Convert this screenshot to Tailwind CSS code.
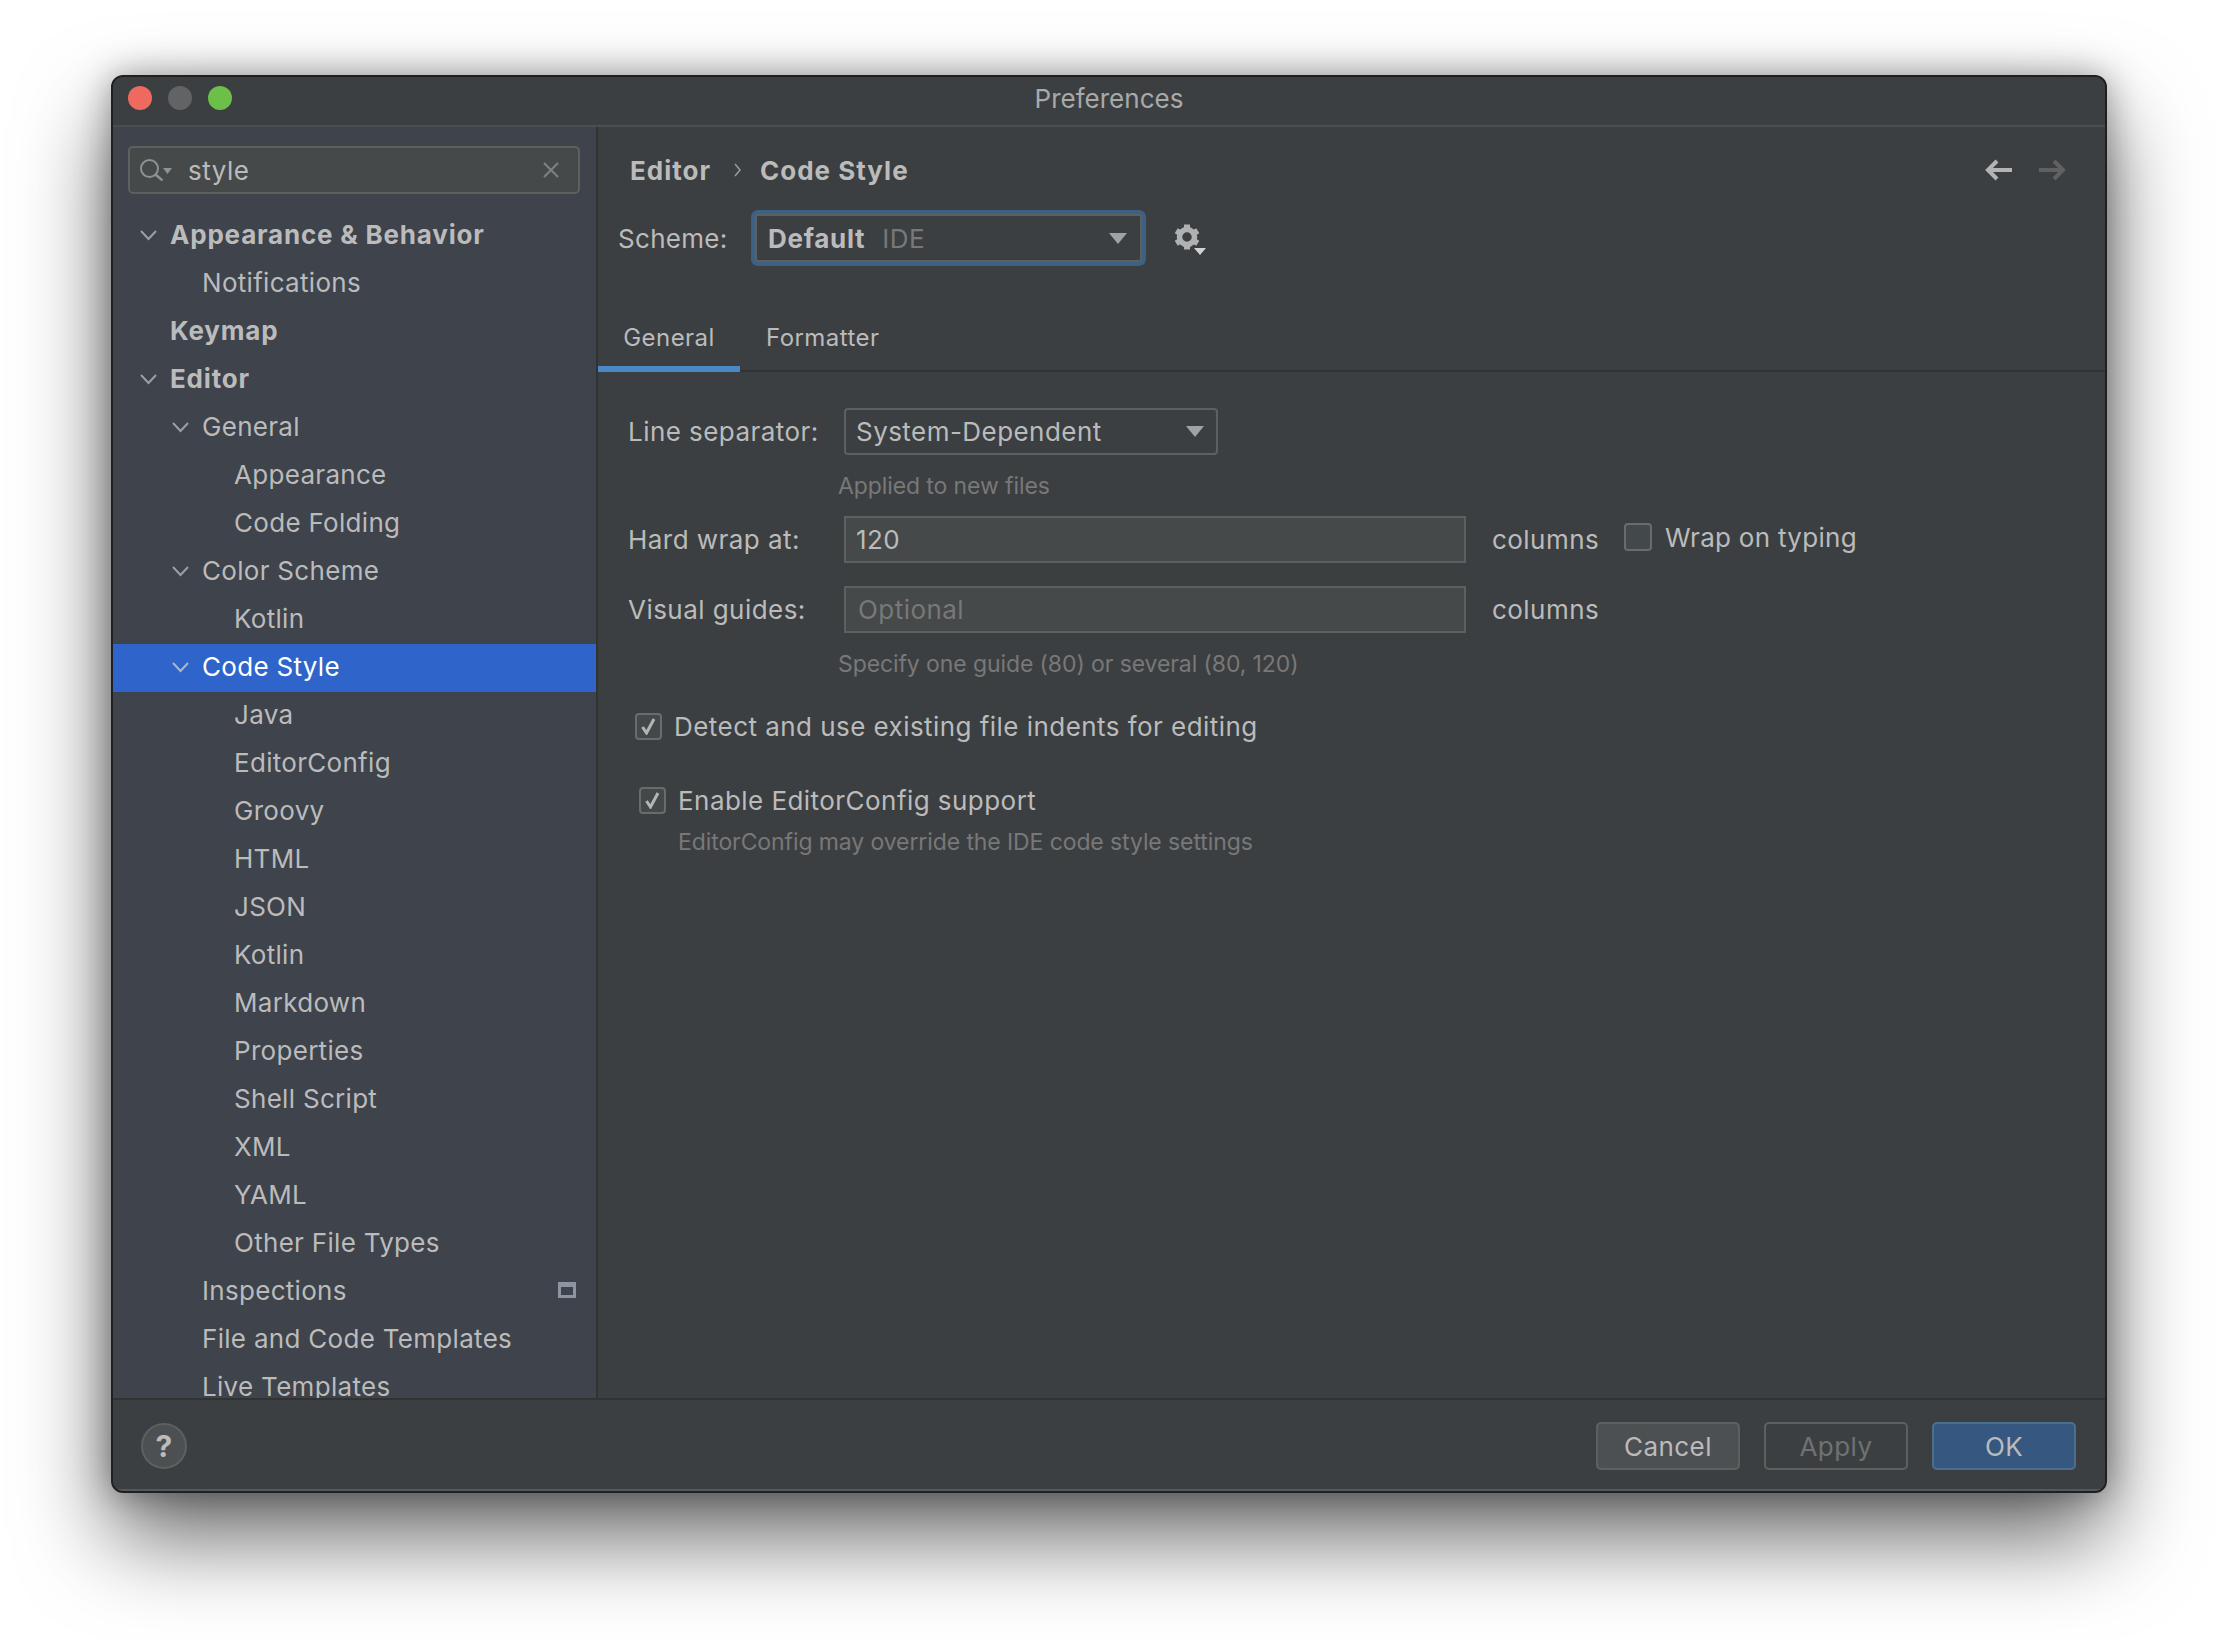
<!DOCTYPE html>
<html lang="en">
<head>
<meta charset="UTF-8">
<title>Preferences</title>
<script src="https://cdn.jsdelivr.net/npm/@tailwindcss/browser@4"></script>
</head>
<body class="h-[1640px] bg-white overflow-hidden font-['Inter',sans-serif] text-[26px] text-[#bbbbbb]">
<div class="absolute left-[111px] top-[75px] w-[1996px] h-[1418px] flex flex-col rounded-[12px] border-2 border-[#1f2021] bg-[#3c3f41] overflow-hidden shadow-[0_44px_90px_rgba(0,0,0,0.6),0_0_34px_rgba(0,0,0,0.35)]">

  <!-- title bar -->
  <div class="relative h-[50px] shrink-0 flex items-center justify-center bg-[#3c3f41] border-b-2 border-[#4b4e50] text-[#a9a9a9] pb-[6px]">
    <div class="absolute left-[15px] top-[9px] flex gap-[16px]">
      <span class="w-[24px] h-[24px] rounded-full bg-[#ee6a5e]"></span>
      <span class="w-[24px] h-[24px] rounded-full bg-[#626365]"></span>
      <span class="w-[24px] h-[24px] rounded-full bg-[#6cc04a]"></span>
    </div>
    <span>Preferences</span>
  </div>

  <div class="flex-1 flex min-h-0">
    <!-- sidebar -->
    <aside class="w-[485px] shrink-0 flex flex-col bg-[#3e434c] border-r-2 border-[#323232] overflow-hidden tracking-[0.3px]">
      <div class="mt-[19px] mx-[15px] h-[48px] shrink-0 w-[452px] flex items-center rounded-[5px] border-2 border-[#5e6060] bg-[#45494a]">
        <svg class="ml-[10px] w-[32px] h-[22px]" viewBox="0 0 32 22" fill="none" stroke="#8f9294" stroke-width="2"><circle cx="9.500" cy="9.500" r="8.500"/><path d="M15.500 15.500l7 6" stroke-width="2.500"/><path d="M23 9h9l-4.500 6z" fill="#8f9294" stroke="none"/></svg>
        <span class="ml-[16px] tracking-[0.5px]">style</span>
        <svg class="ml-auto mr-[19px] w-[16px] h-[16px]" viewBox="0 0 16 16" stroke="#7f8285" stroke-width="2"><path d="M1 1l14 14M15 1L1 15"/></svg>
      </div>

      <div class="mt-[18px] flex flex-col">
        <div class="h-[48px] shrink-0 flex items-center pl-[57px] pb-[4px] font-bold tracking-[0.8px] relative">
          <svg class="absolute left-[27px] top-[18px] w-[17px] h-[11px]" viewBox="0 0 17 11" fill="none" stroke="#9da0a2" stroke-width="2"><path d="M1 1l7.500 8L16 1"/></svg>
          Appearance &amp; Behavior
        </div>
        <div class="h-[48px] shrink-0 flex items-center pl-[89px] pb-[4px]">Notifications</div>
        <div class="h-[48px] shrink-0 flex items-center pl-[57px] pb-[4px] font-bold tracking-[0.8px]">Keymap</div>
        <div class="h-[48px] shrink-0 flex items-center pl-[57px] pb-[4px] font-bold tracking-[0.8px] relative">
          <svg class="absolute left-[27px] top-[18px] w-[17px] h-[11px]" viewBox="0 0 17 11" fill="none" stroke="#9da0a2" stroke-width="2"><path d="M1 1l7.500 8L16 1"/></svg>
          Editor
        </div>
        <div class="h-[48px] shrink-0 flex items-center pl-[89px] pb-[4px] relative">
          <svg class="absolute left-[59px] top-[18px] w-[17px] h-[11px]" viewBox="0 0 17 11" fill="none" stroke="#9da0a2" stroke-width="2"><path d="M1 1l7.500 8L16 1"/></svg>
          General
        </div>
        <div class="h-[48px] shrink-0 flex items-center pl-[121px] pb-[4px]">Appearance</div>
        <div class="h-[48px] shrink-0 flex items-center pl-[121px] pb-[4px]">Code Folding</div>
        <div class="h-[48px] shrink-0 flex items-center pl-[89px] pb-[4px] relative">
          <svg class="absolute left-[59px] top-[18px] w-[17px] h-[11px]" viewBox="0 0 17 11" fill="none" stroke="#9da0a2" stroke-width="2"><path d="M1 1l7.500 8L16 1"/></svg>
          Color Scheme
        </div>
        <div class="h-[48px] shrink-0 flex items-center pl-[121px] pb-[4px]">Kotlin</div>
        <div class="h-[48px] shrink-0 flex items-center pl-[89px] pb-[4px] relative bg-[#2f65ca] text-white">
          <svg class="absolute left-[59px] top-[18px] w-[17px] h-[11px]" viewBox="0 0 17 11" fill="none" stroke="#b4b7bb" stroke-width="2"><path d="M1 1l7.500 8L16 1"/></svg>
          Code Style
        </div>
        <div class="h-[48px] shrink-0 flex items-center pl-[121px] pb-[4px]">Java</div>
        <div class="h-[48px] shrink-0 flex items-center pl-[121px] pb-[4px]">EditorConfig</div>
        <div class="h-[48px] shrink-0 flex items-center pl-[121px] pb-[4px]">Groovy</div>
        <div class="h-[48px] shrink-0 flex items-center pl-[121px] pb-[4px]">HTML</div>
        <div class="h-[48px] shrink-0 flex items-center pl-[121px] pb-[4px]">JSON</div>
        <div class="h-[48px] shrink-0 flex items-center pl-[121px] pb-[4px]">Kotlin</div>
        <div class="h-[48px] shrink-0 flex items-center pl-[121px] pb-[4px]">Markdown</div>
        <div class="h-[48px] shrink-0 flex items-center pl-[121px] pb-[4px]">Properties</div>
        <div class="h-[48px] shrink-0 flex items-center pl-[121px] pb-[4px]">Shell Script</div>
        <div class="h-[48px] shrink-0 flex items-center pl-[121px] pb-[4px]">XML</div>
        <div class="h-[48px] shrink-0 flex items-center pl-[121px] pb-[4px]">YAML</div>
        <div class="h-[48px] shrink-0 flex items-center pl-[121px] pb-[4px]">Other File Types</div>
        <div class="h-[48px] shrink-0 flex items-center justify-between pl-[89px] pr-[20px] pb-[4px]">
          Inspections
          <svg class="w-[18px] h-[16px]" viewBox="0 0 18 16"><path fill="#8c96a3" fill-rule="evenodd" d="M0 0h18v16H0zM3 5v8h12V5z"/></svg>
        </div>
        <div class="h-[48px] shrink-0 flex items-center pl-[89px] pb-[4px]">File and Code Templates</div>
        <div class="h-[48px] shrink-0 flex items-center pl-[89px] pb-[4px]">Live Templates</div>
      </div>
    </aside>

    <!-- main panel -->
    <main class="flex-1 flex flex-col min-w-0 tracking-[0.45px]">
      <div class="mt-[19px] h-[48px] flex items-center pl-[32px] pr-[39px] font-bold tracking-[1px]">
        <span>Editor</span>
        <svg class="ml-[23px] mr-[18px] w-[8px] h-[14px]" viewBox="0 0 8 14" fill="none" stroke="#9a9a9a" stroke-width="1.500"><path d="M1 1l5 6-5 6"/></svg>
        <span>Code Style</span>
        <svg class="ml-auto w-[27px] h-[22px]" viewBox="0 0 27 22" fill="none" stroke="#b4b4b4" stroke-width="4"><path d="M27 11H3M12 2l-9 9 9 9"/></svg>
        <svg class="ml-[27px] w-[27px] h-[22px]" viewBox="0 0 27 22" fill="none" stroke="#5f6163" stroke-width="4"><path d="M0 11h24M15 2l9 9-9 9"/></svg>
      </div>

      <div class="mt-[16px] flex items-center pl-[20px]">
        <span class="w-[133px] tracking-[0.3px]">Scheme:</span>
        <div class="w-[395px] h-[56px] flex items-center rounded-[7px] border-[5px] border-[#3d6185] outline-2 -outline-offset-[6px] outline-[#5e6060] pl-[12px] pr-[14px]">
          <span class="font-bold tracking-[0.7px]">Default</span>
          <span class="ml-[17px] text-[#787878]">IDE</span>
          <svg class="ml-auto w-[18px] h-[11px]" viewBox="0 0 18 11"><path d="M0 0h18l-9 11z" fill="#a0a3a5"/></svg>
        </div>
        <svg class="ml-[28px] mt-[4px] w-[32px] h-[34px]" viewBox="0 0 32 34">
          <g stroke="#afb1b3" fill="none">
            <circle cx="13" cy="14" r="7.500" stroke-width="5.500"/>
            <path d="M13 1.500v5M13 21.500v5M2.200 7.750l4.300 2.500M19.500 17.750l4.300 2.500M2.200 20.250l4.300-2.500M19.500 10.250l4.300-2.500" stroke-width="6"/>
          </g>
          <path d="M20 25h12l-6 7z" fill="#d0d2d3"/>
        </svg>
      </div>

      <!-- tabs -->
      <div class="mt-[36px] h-[70px] flex border-b-2 border-[#323232] text-[24px]">
        <div class="relative w-[142px] flex items-center justify-center pt-[3px]">
          General
          <span class="absolute left-0 right-0 -bottom-[2px] h-[6px] bg-[#4a88c7]"></span>
        </div>
        <div class="flex items-center px-[26px] pt-[3px]">Formatter</div>
      </div>

      <!-- form -->
      <div class="mt-[36px] h-[47px] flex items-center pl-[30px]">
        <span class="w-[216px]">Line separator:</span>
        <div class="w-[374px] h-[47px] flex items-center rounded-[4px] border-2 border-[#5e6060] pl-[10px] pr-[12px]">
          System-Dependent
          <svg class="ml-auto w-[18px] h-[11px]" viewBox="0 0 18 11"><path d="M0 0h18l-9 11z" fill="#a0a3a5"/></svg>
        </div>
      </div>
      <div class="mt-[16px] h-[30px] flex items-center pl-[240px] text-[23px] tracking-[-0.1px] text-[#787878]">Applied to new files</div>

      <div class="mt-[15px] h-[47px] flex items-center pl-[30px]">
        <span class="w-[216px]">Hard wrap at:</span>
        <div class="w-[622px] h-[47px] flex items-center border-2 border-[#5e6060] bg-[#45494a] pl-[10px]">120</div>
        <span class="ml-[26px] w-[132px]">columns</span>
        <span class="w-[28px] h-[28px] -mt-[5px] rounded-[4px] border-2 border-[#6b6b6b] bg-[#43494a]"></span>
        <span class="ml-[13px] -mt-[4px] tracking-[0.3px]">Wrap on typing</span>
      </div>
      <div class="mt-[23px] h-[47px] flex items-center pl-[30px]">
        <span class="w-[216px]">Visual guides:</span>
        <div class="w-[622px] h-[47px] flex items-center border-2 border-[#5e6060] bg-[#45494a] pl-[12px] text-[#787878]">Optional</div>
        <span class="ml-[26px]">columns</span>
      </div>
      <div class="mt-[16px] h-[30px] flex items-center pl-[240px] text-[23px] tracking-[-0.1px] text-[#787878]">Specify one guide (80) or several (80, 120)</div>

      <div class="mt-[32px] h-[30px] flex items-center pl-[37px]">
        <span class="w-[27px] h-[27px] flex items-center justify-center rounded-[4px] border-2 border-[#6b6b6b] bg-[#43494a]">
          <svg class="w-[15px] h-[17px]" viewBox="0 0 15 17" fill="none" stroke="#b4b4b4" stroke-width="3"><path d="M1.500 9l4 6L13 1"/></svg>
        </span>
        <span class="ml-[12px]">Detect and use existing file indents for editing</span>
      </div>
      <div class="mt-[44px] h-[30px] flex items-center pl-[41px]">
        <span class="w-[27px] h-[27px] flex items-center justify-center rounded-[4px] border-2 border-[#6b6b6b] bg-[#43494a]">
          <svg class="w-[15px] h-[17px]" viewBox="0 0 15 17" fill="none" stroke="#b4b4b4" stroke-width="3"><path d="M1.500 9l4 6L13 1"/></svg>
        </span>
        <span class="ml-[12px]">Enable EditorConfig support</span>
      </div>
      <div class="mt-[12px] h-[30px] flex items-center pl-[80px] text-[23px] tracking-[-0.1px] text-[#787878]">EditorConfig may override the IDE code style settings</div>
    </main>
  </div>

  <!-- footer -->
  <div class="h-[93px] shrink-0 flex items-center border-t-2 border-b-2 border-t-[#323232] border-b-[#55585a] bg-[#3c3f41] pl-[28px] pr-[29px] pt-[3px] tracking-[0.45px]">
    <span class="w-[46px] h-[46px] flex items-center justify-center rounded-full border-2 border-[#5e6060] bg-[#4c5052] font-bold text-[30px]">?</span>
    <div class="ml-auto flex gap-[24px]">
      <span class="w-[144px] h-[48px] flex items-center justify-center rounded-[5px] border-2 border-[#5e6060] bg-[#4c5052]">Cancel</span>
      <span class="w-[144px] h-[48px] flex items-center justify-center rounded-[5px] border-2 border-[#5e6060] text-[#6f7173]">Apply</span>
      <span class="w-[144px] h-[48px] flex items-center justify-center rounded-[5px] border-2 border-[#4c708c] bg-[#365880]">OK</span>
    </div>
  </div>
</div>
</body>
</html>
